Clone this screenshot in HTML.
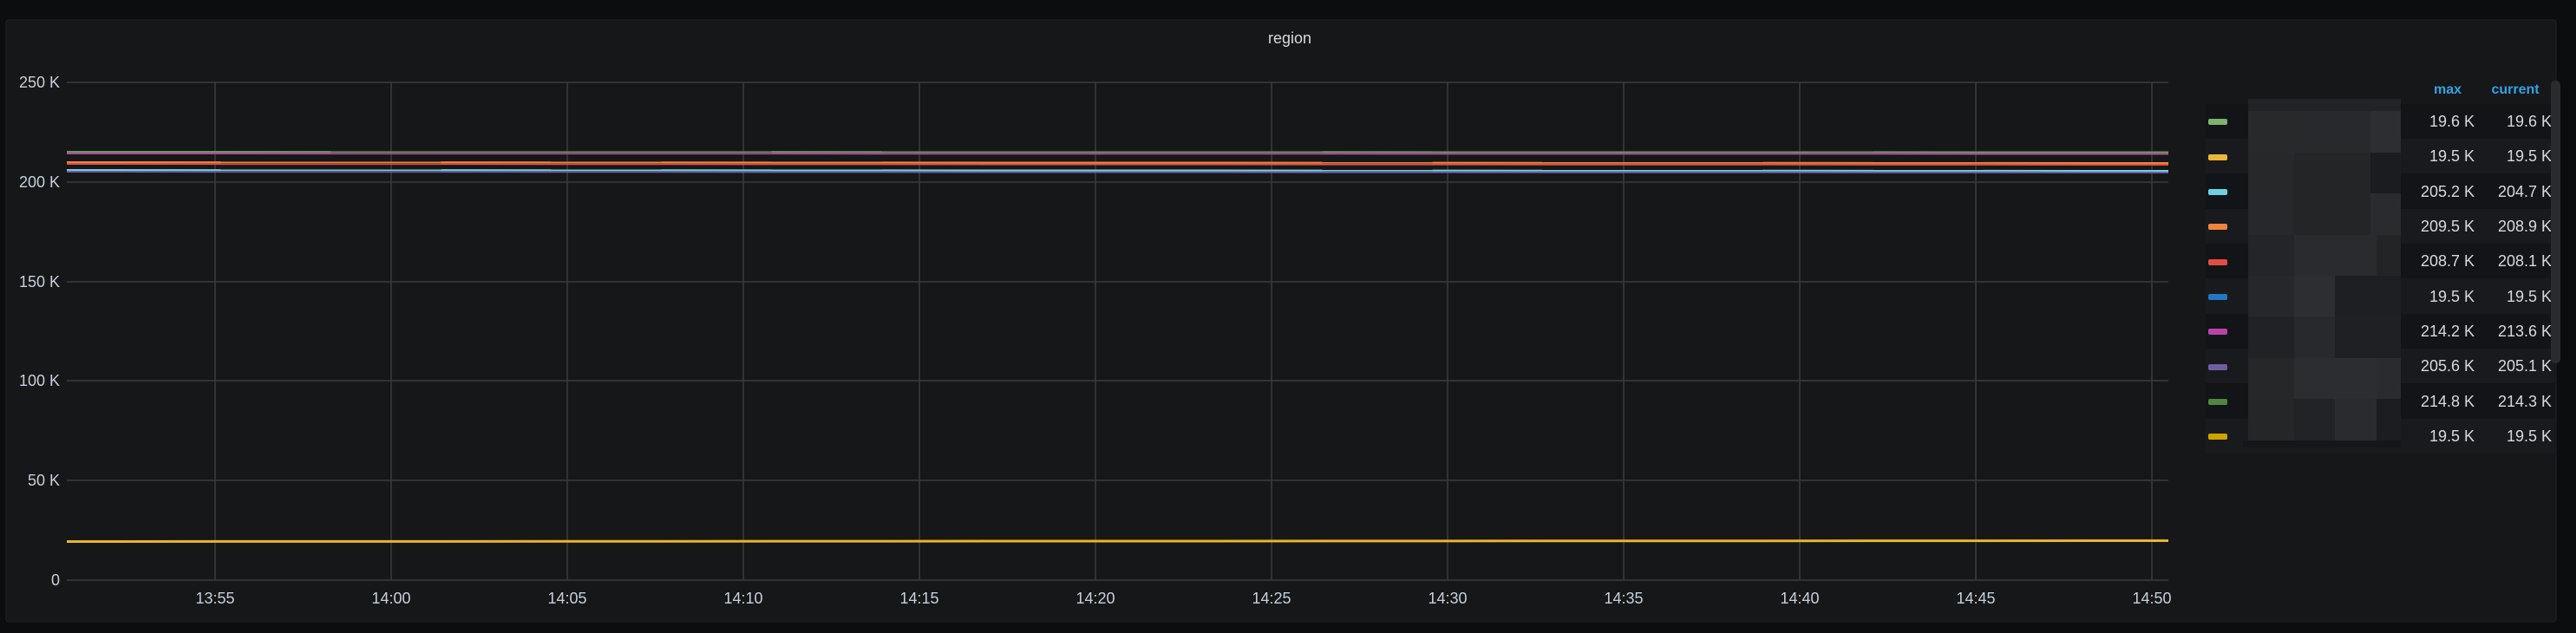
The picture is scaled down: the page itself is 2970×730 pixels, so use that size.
<!DOCTYPE html>
<html><head><meta charset="utf-8"><style>
body{margin:0;background:#0c0d0f;width:2970px;height:730px;overflow:hidden;font-family:"Liberation Sans",sans-serif;}
svg{position:absolute;left:0;top:0}
</style></head><body>
<svg width="2970" height="730" xmlns="http://www.w3.org/2000/svg" font-family="Liberation Sans, sans-serif">
<rect x="0" y="0" width="2970" height="730" fill="#0c0d0f"/>
<rect x="7" y="23" width="2940" height="694" rx="3" fill="#161719" stroke="#212226"/>
<text x="1487" y="50" fill="#d8d9da" font-size="18" text-anchor="middle">region</text>
<g stroke="#3a3b3e" stroke-width="1.5">
<line x1="77" y1="95" x2="2500" y2="95"/><line x1="77" y1="210" x2="2500" y2="210"/>
<line x1="77" y1="325" x2="2500" y2="325"/><line x1="77" y1="439" x2="2500" y2="439"/>
<line x1="77" y1="554" x2="2500" y2="554"/><line x1="77" y1="669" x2="2500" y2="669"/>
<line x1="248" y1="95" x2="248" y2="669"/><line x1="451" y1="95" x2="451" y2="669"/>
<line x1="654" y1="95" x2="654" y2="669"/><line x1="857" y1="95" x2="857" y2="669"/>
<line x1="1060" y1="95" x2="1060" y2="669"/><line x1="1263" y1="95" x2="1263" y2="669"/>
<line x1="1466" y1="95" x2="1466" y2="669"/><line x1="1669" y1="95" x2="1669" y2="669"/>
<line x1="1872" y1="95" x2="1872" y2="669"/><line x1="2075" y1="95" x2="2075" y2="669"/>
<line x1="2278" y1="95" x2="2278" y2="669"/><line x1="2481" y1="95" x2="2481" y2="669"/>
</g>
<g font-size="18" fill="#c7d0d9" text-anchor="end">
<text x="69" y="101">250 K</text><text x="69" y="216">200 K</text><text x="69" y="331">150 K</text>
<text x="69" y="445">100 K</text><text x="69" y="560">50 K</text><text x="69" y="675">0</text>
</g>
<g font-size="18" fill="#c7d0d9" text-anchor="middle">
<text x="248" y="696">13:55</text><text x="451" y="696">14:00</text><text x="654" y="696">14:05</text>
<text x="857" y="696">14:10</text><text x="1060" y="696">14:15</text><text x="1263" y="696">14:20</text>
<text x="1466" y="696">14:25</text><text x="1669" y="696">14:30</text><text x="1872" y="696">14:35</text>
<text x="2075" y="696">14:40</text><text x="2278" y="696">14:45</text><text x="2481" y="696">14:50</text>
</g>
<g stroke-width="2">
<line x1="77" y1="175" x2="2500" y2="175.5" stroke="#629e51"/>
<line x1="77" y1="177" x2="2500" y2="177.5" stroke="#ba43a9"/>
<line x1="77" y1="187" x2="2500" y2="188" stroke="#ef843c"/>
<line x1="77" y1="189" x2="2500" y2="190" stroke="#e24d42"/>
<line x1="77" y1="196" x2="2500" y2="197" stroke="#6ed0e0"/>
<line x1="77" y1="198" x2="2500" y2="199" stroke="#705da0"/>
<line x1="77" y1="624" x2="2500" y2="623" stroke="#e5ac0e"/>
<line x1="77" y1="625" x2="2500" y2="624" stroke="#eab839"/>
</g>
<g font-size="16" fill="#33a2e5" text-anchor="middle" font-weight="bold">
<text x="2822" y="108">max</text><text x="2900" y="108">current</text>
</g>
<g>
<rect x="2543" y="120" width="402" height="40" fill="#131417"/>
<rect x="2543" y="160" width="402" height="40" fill="#191a1d"/>
<rect x="2543" y="200" width="402" height="41" fill="#131417"/>
<rect x="2543" y="241" width="402" height="40" fill="#191a1d"/>
<rect x="2543" y="281" width="402" height="40" fill="#131417"/>
<rect x="2543" y="321" width="402" height="41" fill="#191a1d"/>
<rect x="2543" y="362" width="402" height="40" fill="#131417"/>
<rect x="2543" y="402" width="402" height="40" fill="#191a1d"/>
<rect x="2543" y="442" width="402" height="41" fill="#131417"/>
<rect x="2543" y="483" width="402" height="40" fill="#191a1d"/>
</g>
<g>
<rect x="2592" y="114" width="176" height="400" fill="#222326"/>
<rect x="2592" y="128" width="53" height="48" fill="#27292b"/><rect x="2645" y="128" width="88" height="48" fill="#28292c"/><rect x="2733" y="128" width="35" height="48" fill="#2d2e31"/>
<rect x="2592" y="176" width="53" height="47" fill="#26282a"/><rect x="2645" y="176" width="88" height="47" fill="#232527"/><rect x="2733" y="176" width="35" height="47" fill="#1b1c1f"/>
<rect x="2592" y="223" width="53" height="48" fill="#27282b"/><rect x="2645" y="223" width="88" height="48" fill="#232527"/><rect x="2733" y="223" width="35" height="48" fill="#2a2b2e"/>
<rect x="2592" y="271" width="53" height="47" fill="#242528"/><rect x="2645" y="271" width="95" height="47" fill="#2a2b2e"/><rect x="2740" y="271" width="28" height="47" fill="#232426"/>
<rect x="2592" y="318" width="53" height="47" fill="#26272a"/><rect x="2645" y="318" width="47" height="47" fill="#2d2e31"/><rect x="2692" y="318" width="76" height="47" fill="#1e1f22"/>
<rect x="2592" y="365" width="53" height="48" fill="#212225"/><rect x="2645" y="365" width="47" height="48" fill="#28292c"/><rect x="2692" y="365" width="76" height="48" fill="#1f2023"/>
<rect x="2592" y="413" width="53" height="47" fill="#252729"/><rect x="2645" y="413" width="95" height="47" fill="#2c2d30"/><rect x="2740" y="413" width="28" height="47" fill="#2a2b2e"/>
<rect x="2592" y="460" width="53" height="48" fill="#242628"/><rect x="2645" y="460" width="47" height="48" fill="#222326"/><rect x="2692" y="460" width="48" height="48" fill="#2a2b2e"/><rect x="2740" y="460" width="28" height="48" fill="#1c1d20"/>
<rect x="2586" y="508" width="182" height="8" fill="#151619"/>
</g>
<g>
<rect x="2546" y="137" width="22" height="7" rx="2" fill="#7eb26d"/>
<rect x="2546" y="178" width="22" height="7" rx="2" fill="#eab839"/>
<rect x="2546" y="218" width="22" height="7" rx="2" fill="#6ed0e0"/>
<rect x="2546" y="258" width="22" height="7" rx="2" fill="#ef843c"/>
<rect x="2546" y="299" width="22" height="7" rx="2" fill="#e24d42"/>
<rect x="2546" y="339" width="22" height="7" rx="2" fill="#1f78c1"/>
<rect x="2546" y="379" width="22" height="7" rx="2" fill="#ba43a9"/>
<rect x="2546" y="420" width="22" height="7" rx="2" fill="#705da0"/>
<rect x="2546" y="460" width="22" height="7" rx="2" fill="#508642"/>
<rect x="2546" y="500" width="22" height="7" rx="2" fill="#cca300"/>
</g>
<g font-size="18" fill="#d8d9da" text-anchor="end">
<text x="2853" y="146">19.6 K</text><text x="2942" y="146">19.6 K</text>
<text x="2853" y="186">19.5 K</text><text x="2942" y="186">19.5 K</text>
<text x="2853" y="227">205.2 K</text><text x="2942" y="227">204.7 K</text>
<text x="2853" y="267">209.5 K</text><text x="2942" y="267">208.9 K</text>
<text x="2853" y="307">208.7 K</text><text x="2942" y="307">208.1 K</text>
<text x="2853" y="348">19.5 K</text><text x="2942" y="348">19.5 K</text>
<text x="2853" y="388">214.2 K</text><text x="2942" y="388">213.6 K</text>
<text x="2853" y="428">205.6 K</text><text x="2942" y="428">205.1 K</text>
<text x="2853" y="469">214.8 K</text><text x="2942" y="469">214.3 K</text>
<text x="2853" y="509">19.5 K</text><text x="2942" y="509">19.5 K</text>
</g>
<rect x="2941" y="93" width="11" height="326" rx="5" fill="#2a2b2e"/>
</svg>
</body></html>
